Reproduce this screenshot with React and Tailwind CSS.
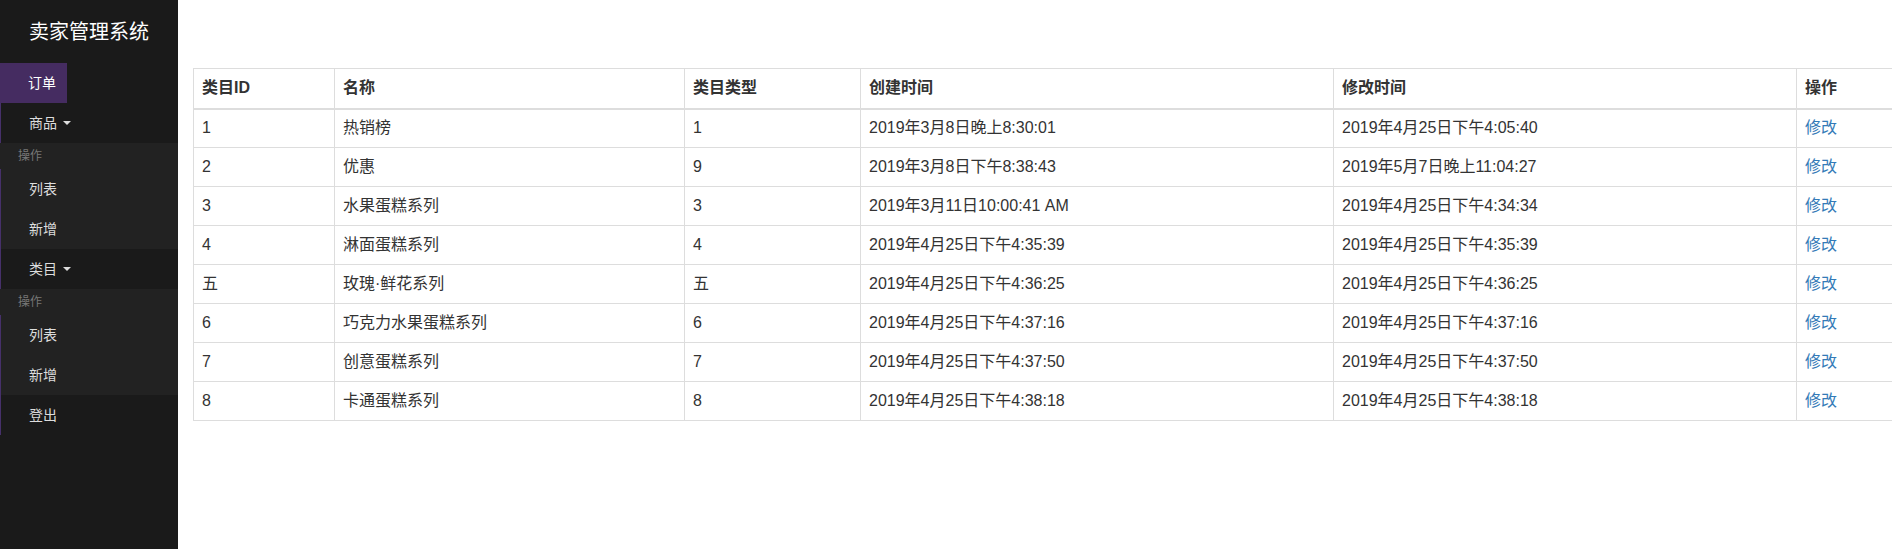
import React from 'react';

const rows = [
    ['1', '热销榜', '1', '2019年3月8日晚上8:30:01', '2019年4月25日下午4:05:40'],
    ['2', '优惠', '9', '2019年3月8日下午8:38:43', '2019年5月7日晚上11:04:27'],
    ['3', '水果蛋糕系列', '3', '2019年3月11日10:00:41 AM', '2019年4月25日下午4:34:34'],
    ['4', '淋面蛋糕系列', '4', '2019年4月25日下午4:35:39', '2019年4月25日下午4:35:39'],
    ['五', '玫瑰·鲜花系列', '五', '2019年4月25日下午4:36:25', '2019年4月25日下午4:36:25'],
    ['6', '巧克力水果蛋糕系列', '6', '2019年4月25日下午4:37:16', '2019年4月25日下午4:37:16'],
    ['7', '创意蛋糕系列', '7', '2019年4月25日下午4:37:50', '2019年4月25日下午4:37:50'],
    ['8', '卡通蛋糕系列', '8', '2019年4月25日下午4:38:18', '2019年4月25日下午4:38:18'],
];

const Caret = () => (
    <span className="inline-block ml-[6px] align-middle w-0 h-0 border-l-[4px] border-r-[4px] border-t-[4px] border-l-transparent border-r-transparent border-t-[#ddd]" />
);

const NavItem = ({ children }) => (
    <li className="h-10 flex items-center pl-[28px] border-l border-[#46306a] text-[14px] text-[#ddd]">
        {children}
    </li>
);

const DropdownHeader = () => (
    <li className="h-[26px] flex items-center pl-[18px] text-[12px] text-[#777]">操作</li>
);

const Sidebar = () => (
    <aside className="w-[178px] shrink-0 bg-[#1a1a1a] min-h-[549px]">
        <div className="h-[63px] flex items-center justify-center text-white text-[20px]">卖家管理系统</div>
        <ul>
            <li className="h-10 w-[67px] flex items-center pl-[28px] bg-[#452c61] text-[14px] text-white">订单</li>
            <NavItem>商品<Caret /></NavItem>
            <li className="bg-[#222]">
                <ul>
                    <DropdownHeader />
                    <NavItem>列表</NavItem>
                    <NavItem>新增</NavItem>
                </ul>
            </li>
            <NavItem>类目<Caret /></NavItem>
            <li className="bg-[#222]">
                <ul>
                    <DropdownHeader />
                    <NavItem>列表</NavItem>
                    <NavItem>新增</NavItem>
                </ul>
            </li>
            <NavItem>登出</NavItem>
        </ul>
    </aside>
);

export default function App() {
    const headers = ['类目ID', '名称', '类目类型', '创建时间', '修改时间', '操作'];
    const widths = ['w-[141px]', 'w-[350px]', 'w-[176px]', 'w-[473px]', 'w-[463px]', 'w-[180px]'];

    return (
        <div
            className="flex w-[1892px] h-[549px] overflow-hidden bg-white"
            style={{ fontFamily: '"Liberation Sans", "Noto Sans CJK SC", sans-serif' }}
        >
            <Sidebar />
            <main className="flex-1 pl-[15px] pt-[68px] overflow-hidden">
                <table className="border-collapse table-fixed w-[1783px] text-[16px] text-[#333]">
                    <thead>
                        <tr>
                            {headers.map((h, i) => (
                                <th
                                    key={h}
                                    className={`${widths[i]} h-[40px] px-2 text-left font-bold border border-[#ddd] border-b-2`}
                                >
                                    {h}
                                </th>
                            ))}
                        </tr>
                    </thead>
                    <tbody>
                        {rows.map((r) => (
                            <tr key={r[0] + r[1]}>
                                {r.map((c, i) => (
                                    <td key={i} className="h-[39px] px-2 border border-[#ddd]">
                                        {c}
                                    </td>
                                ))}
                                <td className="h-[39px] px-2 border border-[#ddd] text-[#337ab7]">修改</td>
                            </tr>
                        ))}
                    </tbody>
                </table>
            </main>
        </div>
    );
}
